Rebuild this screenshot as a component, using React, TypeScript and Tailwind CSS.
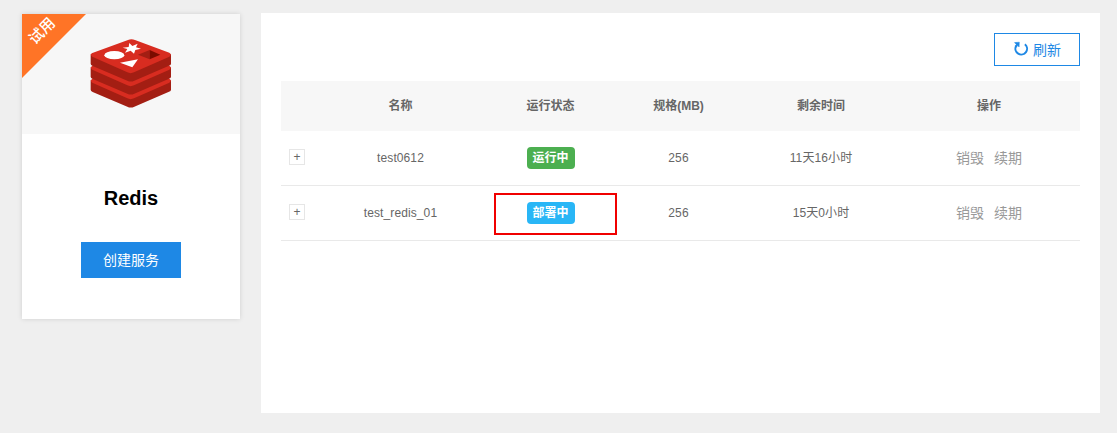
import type { ReactNode } from "react";

const rows = [
  { name: "test0612", status: "运行中", tone: "bg-[#4caf50]", marked: false, size: "256", left: "11天16小时" },
  { name: "test_redis_01", status: "部署中", tone: "bg-[#29b6f6]", marked: true, size: "256", left: "15天0小时" },
];

const columns = "grid grid-cols-[32px_175px_125px_131px_154px_182px] items-center text-center";

function Layer({ y }: { y: number }) {
  return (
    <g transform={`translate(0 ${y})`}>
      <path fill="#a31e13" d="M32 73V101Q32 105 38 108L142 152Q152 157 163 152L267 107Q273 105 273 101V73Z" />
      <path fill="#d82c20" d="M37 80Q28 73 37 69L144 30Q154 25 165 30L268 68Q277 73 268 80L162 127Q152 132 142 127Z" />
    </g>
  );
}

function RedisLogo() {
  return (
    <svg viewBox="30 24 246 213" className="h-[71px] w-[82px]">
      <Layer y={78} />
      <Layer y={39} />
      <Layer y={0} />
      <ellipse cx="103" cy="75.5" rx="30" ry="12.5" fill="#fff" />
      <path fill="#fff" d="M148 39L157 48L173 41L168 52L183 56L166 60L162 71L152 62L135 68L142 57L128 53L146 51Z" />
      <path fill="#fff" d="M120 98L174 88L157 112Z" />
      <path fill="#a31e13" d="M174 74L209 60V88Z" />
      <path fill="#7a0c00" d="M209 60L241 74L209 88Z" />
    </svg>
  );
}

function RefreshIcon() {
  return (
    <svg viewBox="0 0 16 16" className="-mt-0.5 h-4 w-4 fill-none stroke-[#1e88e5]">
      <path strokeWidth="2" d="M11.9 3.2A5.8 5.8 0 1 1 3.1 5" />
      <path strokeWidth="0.5" className="fill-[#1e88e5]" d="M1.5 1.6L6.3 1.2L6.1 6L4.8 4.6L3.4 6.2L2 5L3.3 3.4Z" />
    </svg>
  );
}

function HeadCell({ children }: { children?: ReactNode }) {
  return <div className="font-bold">{children}</div>;
}

export default function App() {
  return (
    <div className="flex h-[433px] w-[1117px] items-start bg-[#efefef] pt-[13px] pl-[22px] font-['Liberation_Sans','Noto_Sans_CJK_SC',sans-serif] text-xs text-[#666]">
      <aside className="relative mt-px h-[305px] w-[218px] shrink-0 bg-white shadow-[0_0_5px_rgba(0,0,0,0.13)]">
        <div className="flex h-[120px] justify-center bg-[#f7f7f7] pt-6">
          <RedisLogo />
        </div>
        <svg viewBox="0 0 64 64" className="absolute top-0 left-0 h-16 w-16">
          <path d="M0 0H64L0 64Z" fill="#ff7426" />
        </svg>
        <span className="absolute top-[7px] left-[5px] -rotate-45 text-[15px] leading-5 font-medium text-white">试用</span>
        <div className="flex flex-col items-center">
          <h2 className="mt-[49px] text-xl leading-[30px] font-bold text-black">Redis</h2>
          <button className="mt-[29px] h-9 w-[100px] bg-[#1e88e5] text-sm text-white">创建服务</button>
        </div>
      </aside>

      <main className="ml-[21px] h-[400px] w-[839px] shrink-0 bg-white px-5 pt-5">
        <div className="flex justify-end">
          <button className="flex h-[33px] w-[86px] items-center justify-center gap-1 border border-[#1e88e5] text-sm text-[#1e88e5]">
            <RefreshIcon />
            刷新
          </button>
        </div>
        <div className="mt-[15px]">
          <div className={`${columns} h-[50px] bg-[#f7f7f7]`}>
            <HeadCell />
            <HeadCell>名称</HeadCell>
            <HeadCell>运行状态</HeadCell>
            <HeadCell>规格(MB)</HeadCell>
            <HeadCell>剩余时间</HeadCell>
            <HeadCell>操作</HeadCell>
          </div>
          {rows.map((row) => (
            <div key={row.name} className={`${columns} h-[55px] border-b border-[#e9e9e9]`}>
              <button className="mb-0.5 flex h-4 w-4 items-center justify-center justify-self-center border border-[#e6e6e6] leading-none">
                +
              </button>
              <div className="tracking-[0.1px]">{row.name}</div>
              <div className="relative flex justify-center">
                <span className={`${row.tone} h-[22px] w-12 rounded-[4px] leading-[22px] font-bold text-white`}>
                  {row.status}
                </span>
                {row.marked && <i className="absolute -top-[9px] left-[6px] h-[42px] w-[123px] border-2 border-[#f00000]" />}
              </div>
              <div className="tracking-[0.1px]">{row.size}</div>
              <div className="tracking-[0.1px]">{row.left}</div>
              <div className="flex justify-center gap-[10px] text-sm text-[#999]">
                <a>销毁</a>
                <a>续期</a>
              </div>
            </div>
          ))}
        </div>
      </main>
    </div>
  );
}
